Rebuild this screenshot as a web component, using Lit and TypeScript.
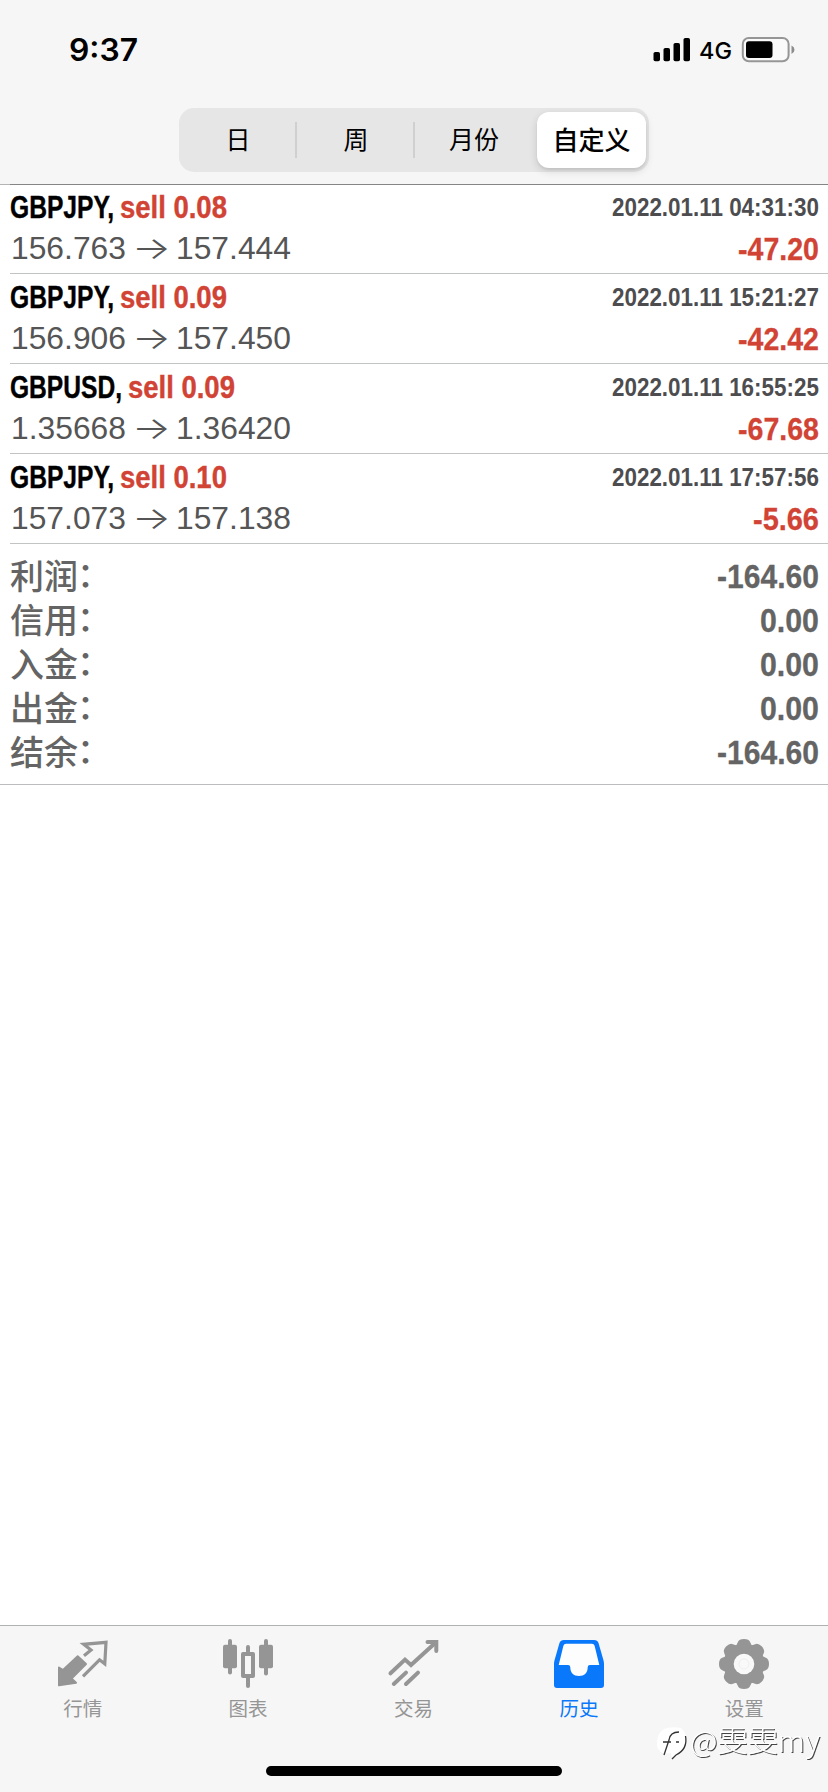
import { LitElement, html, svg, css } from "lit";
import { customElement, property } from "lit/decorators.js";

/** Single line of text condensed to an exact width. */
@customElement("fit-text")
class FitText extends LitElement {
  @property() text = "";
  @property({ type: Number }) w = 100;
  @property({ type: Number }) base = 30;
  static styles = css`
    :host { display: block; }
    svg { display: block; overflow: visible; }
    text { fill: currentColor; stroke: currentColor; stroke-width: var(--weight, 0); white-space: pre; }
  `;
  updated() {
    const node = this.renderRoot.querySelector("text") as SVGTextElement;
    const natural = node.getComputedTextLength();
    if (natural > 0) node.setAttribute("transform", `scale(${this.w / natural} 1)`);
  }
  render() {
    return html`<svg width=${this.w} height="41"><text x="0" y=${this.base}>${this.text}</text></svg>`;
  }
}

interface Deal {
  symbol: string; symbolW: number; side: string; sideW: number;
  open: string; close: string; time: string; profit: string; profitW: number;
}

const deals: Deal[] = [
  { symbol: "GBPJPY,", symbolW: 104, side: "sell 0.08", sideW: 107, open: "156.763", close: "157.444", time: "2022.01.11 04:31:30", profit: "-47.20", profitW: 81 },
  { symbol: "GBPJPY,", symbolW: 104, side: "sell 0.09", sideW: 107, open: "156.906", close: "157.450", time: "2022.01.11 15:21:27", profit: "-42.42", profitW: 81 },
  { symbol: "GBPUSD,", symbolW: 112, side: "sell 0.09", sideW: 107, open: "1.35668", close: "1.36420", time: "2022.01.11 16:55:25", profit: "-67.68", profitW: 81 },
  { symbol: "GBPJPY,", symbolW: 104, side: "sell 0.10", sideW: 107, open: "157.073", close: "157.138", time: "2022.01.11 17:57:56", profit: "-5.66", profitW: 66 },
];

const totals: [string, string, number][] = [
  ["利润", "-164.60", 102],
  ["信用", "0.00", 59],
  ["入金", "0.00", 59],
  ["出金", "0.00", 59],
  ["结余", "-164.60", 102],
];

const icons = {
  quotes: svg`
    <path d="M1 29.5 5 32 19.7 18.3 28 26 13.5 40.5 18 44.8 1 47.3Z" fill="currentColor" stroke="currentColor" stroke-width="2" stroke-linejoin="round"/>
    <path d="M26 17.7 33 12 25.7 6.3 48 4.3 46.8 25.8 41.5 21.8 25 38.3" fill="none" stroke="currentColor" stroke-width="3.2"/>`,
  charts: svg`
    <g fill="currentColor">
      <rect x="0" y="6.7" width="14" height="23.6" rx="2"/><rect x="5" y="1" width="4" height="35.5" rx="2"/>
      <rect x="36" y="6.7" width="14" height="23.6" rx="2"/><rect x="41" y="1" width="4" height="36.5" rx="2"/>
      <rect x="23" y="7" width="4" height="9" rx="2"/><rect x="23" y="38" width="4" height="12" rx="2"/>
    </g>
    <rect x="20" y="16" width="10" height="22" fill="none" stroke="currentColor" stroke-width="4" stroke-linejoin="round"/>`,
  trade: svg`
    <g fill="none" stroke="currentColor" stroke-width="4" stroke-linecap="round">
      <path d="M1.5 35.3 16 21.6 22 27 46.7 4.5"/><path d="M38.5 4H47.3V13"/>
      <path d="M4.8 46 17 34.6M17 46 29 34.6"/>
    </g>`,
  history: svg`
    <path d="M10 2H40Q43.5 2 44.6 5.3L49.4 22Q50 24 50 26V47Q50 50 47 50H3Q0 50 0 47V26Q0 24 .6 22L5.4 5.3Q6.5 2 10 2Z" fill="currentColor"/>
    <path d="M12 5.7H38Q40 5.7 40.6 7.7L45.3 27H36Q33.7 27 33.7 29.3C33.7 35 30.5 38 25 38S16.3 35 16.3 29.3Q16.3 27 14 27H4.7L9.4 7.7Q10 5.7 12 5.7Z" fill="#fdfdfd"/>`,
  settings: svg`
    <g fill="currentColor">
      ${[0, 45, 90, 135, 180, 225, 270, 315].map(a => svg`<path d="M15.5 9Q18 7 18.8 4.2Q20 1 25 1T31.2 4.2Q32 7 34.5 9L25 25Z" transform="rotate(${a} 25 26)"/>`)}
      <circle cx="25" cy="26" r="19"/>
    </g>
    <circle cx="25" cy="26" r="10.3" fill="#f9f9f9"/><circle cx="25" cy="26" r="5" fill="none" stroke="#efefef"/>`,
};

const tabs: [keyof typeof icons, string][] = [
  ["quotes", "行情"], ["charts", "图表"], ["trade", "交易"], ["history", "历史"], ["settings", "设置"],
];

@customElement("app-root")
class AppRoot extends LitElement {
  static styles = css`
    :host {
      display: flex; flex-direction: column; position: relative;
      width: 828px; height: 1792px; overflow: hidden; background: #fff;
      font-family: "Liberation Sans", "Noto Sans CJK SC", sans-serif;
    }
    * { box-sizing: border-box; }
    header { height: 184px; flex: none; background: #f6f6f6; box-shadow: 0 1px 0 #b4b4b4; }
    .status { display: flex; justify-content: space-between; height: 108px; padding: 31px 32px 0 69px; font-family: "Inter", sans-serif; }
    .time { font-size: 31px; font-weight: 600; }
    .signal { display: flex; }
    .net { font-size: 23.5px; font-weight: 500; margin: 0 9px 0 8px; }
    .status svg { display: block; }
    .segments { display: flex; width: 470px; height: 64px; margin-left: 179px; padding: 4px 3px 4px 0; border-radius: 15px; background: #e6e6e7;
      font-family: "Noto Sans CJK SC", sans-serif; font-size: 25px; color: #000; }
    .seg { width: 118px; display: flex; align-items: center; justify-content: center; padding-bottom: 4px; position: relative; }
    .seg.lined::after { content: ""; position: absolute; right: 0; top: 10px; width: 2px; height: 36px; background: #d0d0d1; }
    .seg.on { width: 109px; margin-left: 4px; background: #fff; border-radius: 12px; font-weight: 500; font-size: 26px; box-shadow: 0 3px 8px rgba(0,0,0,.14), 0 2px 2px rgba(0,0,0,.05); }
    .deal { height: 90px; margin-left: 10px; padding: 4px 9px 0 0; border-bottom: 1px solid #c2c3c3; }
    .deal:first-child { border-top: 1px solid #858585; padding-top: 3px; }
    .line { display: flex; justify-content: space-between; height: 41px; }
    .left { display: flex; }
    .title { font-size: 31.5px; font-weight: 700; gap: 6px; --weight: .4px; }
    .red { color: #d14334; }
    .prices { font-size: 31.5px; color: #555; padding-left: 1px; }
    .arrow { font-family: "Inter", sans-serif; font-weight: 300; font-size: 31px; margin: 0 5px 0 6px; }
    .date { font-size: 26.5px; font-weight: 700; color: #4d4d50; }
    .profit { font-size: 32px; font-weight: 700; --weight: .3px; }
    .totals { height: 241px; padding: 10px 9px 0 10px; border-bottom: 1px solid #bcbcbe; color: #646464; }
    .total { display: flex; justify-content: space-between; height: 44px; }
    .label { font: 500 34px/42px "Noto Sans CJK SC", sans-serif; white-space: nowrap; }
    .colon { position: relative; top: -2px; left: -1px; }
    .sum { font-size: 34px; font-weight: 700; --weight: .3px; }
    .space { flex: 1; }
    footer { flex: none; height: 167px; border-top: 1px solid #b0b1b1; background: #f6f6f6; }
    nav { display: flex; padding: 12px 1px 0 0; }
    .tab { flex: 1; display: flex; flex-direction: column; align-items: center; color: #959595;
      font: 400 19.5px/28px "Noto Sans CJK SC", sans-serif; gap: 6px; }
    .tab svg { display: block; overflow: visible; }
    .tab.on { color: #0a78fa; }
    .home { position: absolute; left: 266px; top: 1766px; width: 296px; height: 10px; border-radius: 5px; background: #000; }
    .mark { position: absolute; left: 656px; top: 1722px; display: flex; align-items: center; height: 42px; color: #fff; }
    .mark fit-text { font: 300 29px "Noto Sans CJK SC", sans-serif; filter: drop-shadow(1px 1px 0 #444); }
  `;

  render() {
    return html`
      <header>
        <div class="status">
          <fit-text class="time" text="9:37" .w=${69} .base=${30}></fit-text>
          <div class="signal">
            <svg width="38" height="41"><rect x="0.5" y="21" width="6.5" height="9.3" rx="1.8"/><rect x="10.5" y="17" width="6.5" height="13.3" rx="1.8"/><rect x="20.5" y="12" width="6.5" height="18.3" rx="1.8"/><rect x="30.5" y="7" width="6.5" height="23.3" rx="1.8"/></svg>
            <fit-text class="net" text="4G" .w=${33} .base=${28}></fit-text>
            <svg width="55" height="41"><rect x="1.8" y="7" width="45.8" height="23.3" rx="6" fill="#fafafa" stroke="#969696" stroke-width="2"/><rect x="5" y="10.3" width="26.5" height="16.8" rx="3"/><path d="M50.5 14.5Q53.5 16 53.5 18.8T50.5 23Z" fill="#8c8c8c"/></svg>
          </div>
        </div>
        <div class="segments">
          <div class="seg lined">日</div><div class="seg lined">周</div><div class="seg">月份</div><div class="seg on">自定义</div>
        </div>
      </header>
      <section>
        ${deals.map(d => html`<div class="deal">
          <div class="line">
            <div class="left title">
              <fit-text text=${d.symbol} .w=${d.symbolW}></fit-text>
              <fit-text class="red" text=${d.side} .w=${d.sideW}></fit-text>
            </div>
            <fit-text class="date" text=${d.time} .w=${207} .base=${28}></fit-text>
          </div>
          <div class="line">
            <div class="left prices">
              <fit-text text=${d.open} .w=${115}></fit-text>
              <fit-text class="arrow" text="→" .w=${39}></fit-text>
              <fit-text text=${d.close} .w=${115}></fit-text>
            </div>
            <fit-text class="profit red" text=${d.profit} .w=${d.profitW} .base=${31}></fit-text>
          </div>
        </div>`)}
      </section>
      <section class="totals">
        ${totals.map(([l, v, w]) => html`<div class="total"><span class="label">${l}<span class="colon">：</span></span><fit-text class="sum" text=${v} .w=${w} .base=${34}></fit-text></div>`)}
      </section>
      <div class="space"></div>
      <footer>
        <nav>
          ${tabs.map(([k, l]) => html`<div class="tab ${k === "history" ? "on" : ""}"><svg width="50" height="50" viewBox="0 0 50 50">${icons[k]}</svg><span>${l}</span></div>`)}
        </nav>
      </footer>
      <div class="home"></div>
      <div class="mark">
        <svg width="34" height="42" viewBox="0 0 34 42"><path d="M8 7Q15 4 25 6Q31 11 30 21Q29 30 20 33L16 36 15 31Q3 33 1 24Q0 12 8 7Z" fill="#fff"/><path d="M8 33Q10 27 13 18Q14 10 23 10M7 20H15M20 20H23M29.5 14Q32 27 20 33L16 37" fill="none" stroke="#333" stroke-width="1.3"/></svg>
        <fit-text text="@雯雯my" .w=${130} .base=${29}></fit-text>
      </div>
    `;
  }
}
